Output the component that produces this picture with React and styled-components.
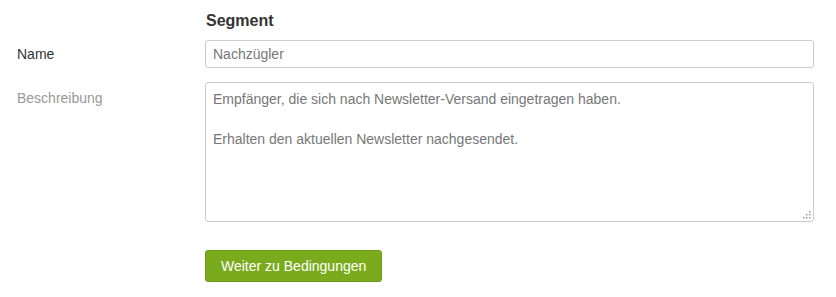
import React from "react";
import styled, { createGlobalStyle } from "styled-components";

const GlobalStyle = createGlobalStyle`
  html, body {
    margin: 0;
    padding: 0;
    background: #fff;
    font-family: "Liberation Sans", Arial, sans-serif;
  }
`;

const Form = styled.form`
  display: grid;
  grid-template-columns: 188px 609px;
  padding: 11px 0 0 17px;
`;

const Heading = styled.h3`
  grid-column: 2;
  margin: 0 0 9px 1px;
  font-size: 16px;
  line-height: 20px;
  font-weight: bold;
  color: #333;
`;

const Label = styled.label`
  grid-column: 1;
  font-size: 14px;
  line-height: 20px;
  color: ${(p) => (p.$muted ? "#999" : "#333")};
  align-self: ${(p) => (p.$top ? "start" : "center")};
  padding-top: ${(p) => (p.$top ? "6px" : "0")};
  margin-top: ${(p) => (p.$top ? "14px" : "0")};
`;

const Input = styled.input`
  grid-column: 2;
  box-sizing: border-box;
  width: 100%;
  height: 28px;
  padding: 0 7px;
  border: 1px solid #ccc;
  border-radius: 3px;
  font-family: inherit;
  font-size: 14px;
  color: #777;
  outline: none;
`;

const AreaWrap = styled.div`
  grid-column: 2;
  position: relative;
  margin-top: 14px;
  height: 140px;
`;

const TextArea = styled.textarea`
  display: block;
  box-sizing: border-box;
  width: 100%;
  height: 100%;
  padding: 6px 7px;
  border: 1px solid #ccc;
  border-radius: 3px;
  font-family: inherit;
  font-size: 14px;
  line-height: 20px;
  color: #777;
  resize: none;
  outline: none;
`;

const Grip = styled.svg`
  position: absolute;
  right: 3px;
  bottom: 3px;
  pointer-events: none;
`;

const Actions = styled.div`
  grid-column: 2;
  padding-top: 28px;
`;

const Button = styled.button`
  height: 32px;
  padding: 0 15px;
  border: 1px solid #6f9c18;
  border-radius: 3px;
  background: #7aab1c;
  color: #fff;
  font-family: inherit;
  font-size: 14px;
  cursor: pointer;
`;

const gripDots = [
  [6, 0],
  [3, 3],
  [6, 3],
  [0, 6],
  [3, 6],
  [6, 6],
];

export default function App() {
  return (
    <>
      <GlobalStyle />
      <Form onSubmit={(e) => e.preventDefault()}>
        <Heading>Segment</Heading>
        <Label htmlFor="name">Name</Label>
        <Input id="name" defaultValue="Nachzügler" />
        <Label htmlFor="desc" $muted $top>
          Beschreibung
        </Label>
        <AreaWrap>
          <TextArea
            id="desc"
            defaultValue={
              "Empfänger, die sich nach Newsletter-Versand eingetragen haben.\n\nErhalten den aktuellen Newsletter nachgesendet."
            }
          />
          <Grip width="8" height="8" viewBox="0 0 8 8">
            {gripDots.map(([x, y]) => (
              <rect key={`${x}-${y}`} x={x} y={y} width="1.5" height="1.5" fill="#9a9a9a" />
            ))}
          </Grip>
        </AreaWrap>
        <Actions>
          <Button type="submit">Weiter zu Bedingungen</Button>
        </Actions>
      </Form>
    </>
  );
}
